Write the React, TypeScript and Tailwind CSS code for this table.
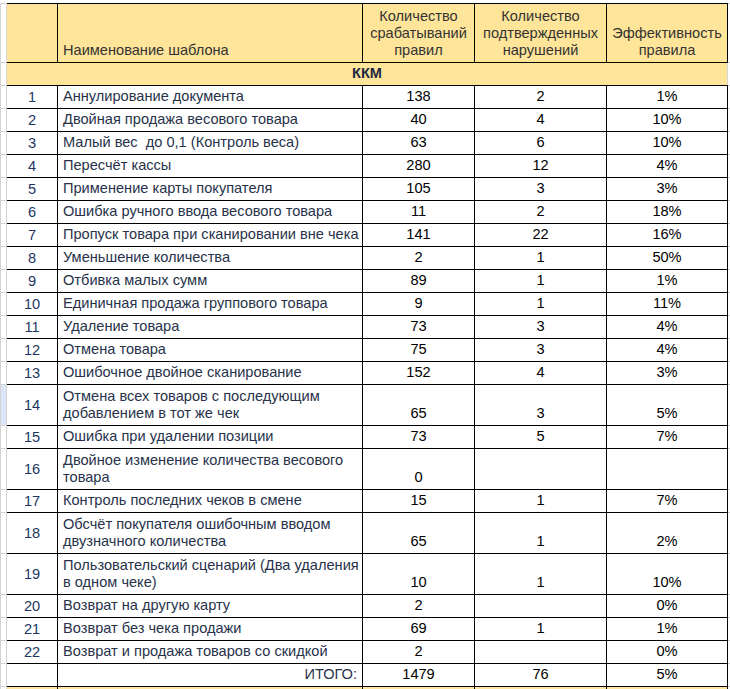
import React from 'react'

type Row = {
  n: number
  name: React.ReactNode
  hits: string
  confirmed: string
  eff: string
  tall?: boolean
}

const rows: Row[] = [
  { n: 1, name: 'Аннулирование документа', hits: '138', confirmed: '2', eff: '1%' },
  { n: 2, name: 'Двойная продажа весового товара', hits: '40', confirmed: '4', eff: '10%' },
  { n: 3, name: 'Малый вес\u00a0 до 0,1 (Контроль веса)', hits: '63', confirmed: '6', eff: '10%' },
  { n: 4, name: 'Пересчёт кассы', hits: '280', confirmed: '12', eff: '4%' },
  { n: 5, name: 'Применение карты покупателя', hits: '105', confirmed: '3', eff: '3%' },
  { n: 6, name: 'Ошибка ручного ввода весового товара', hits: '11', confirmed: '2', eff: '18%' },
  { n: 7, name: 'Пропуск товара при сканировании вне чека', hits: '141', confirmed: '22', eff: '16%' },
  { n: 8, name: 'Уменьшение количества', hits: '2', confirmed: '1', eff: '50%' },
  { n: 9, name: 'Отбивка малых сумм', hits: '89', confirmed: '1', eff: '1%' },
  { n: 10, name: 'Единичная продажа группового товара', hits: '9', confirmed: '1', eff: '11%' },
  { n: 11, name: 'Удаление товара', hits: '73', confirmed: '3', eff: '4%' },
  { n: 12, name: 'Отмена товара', hits: '75', confirmed: '3', eff: '4%' },
  { n: 13, name: 'Ошибочное двойное сканирование', hits: '152', confirmed: '4', eff: '3%' },
  {
    n: 14,
    name: (
      <>
        Отмена всех товаров с последующим
        <br />
        добавлением в тот же чек
      </>
    ),
    hits: '65',
    confirmed: '3',
    eff: '5%',
    tall: true,
  },
  { n: 15, name: 'Ошибка при удалении позиции', hits: '73', confirmed: '5', eff: '7%' },
  {
    n: 16,
    name: (
      <>
        Двойное изменение количества весового
        <br />
        товара
      </>
    ),
    hits: '0',
    confirmed: '',
    eff: '',
    tall: true,
  },
  { n: 17, name: 'Контроль последних чеков в смене', hits: '15', confirmed: '1', eff: '7%' },
  {
    n: 18,
    name: (
      <>
        Обсчёт покупателя ошибочным вводом
        <br />
        двузначного количества
      </>
    ),
    hits: '65',
    confirmed: '1',
    eff: '2%',
    tall: true,
  },
  {
    n: 19,
    name: (
      <>
        Пользовательский сценарий (Два удаления
        <br />в одном чеке)
      </>
    ),
    hits: '10',
    confirmed: '1',
    eff: '10%',
    tall: true,
  },
  { n: 20, name: 'Возврат на другую карту', hits: '2', confirmed: '', eff: '0%' },
  { n: 21, name: 'Возврат без чека продажи', hits: '69', confirmed: '1', eff: '1%' },
  { n: 22, name: 'Возврат и продажа товаров со скидкой', hits: '2', confirmed: '', eff: '0%' },
]

const cell = 'border border-black px-[5px] pb-[3px] align-bottom leading-[17px]'
const grid = 'border border-[#d4d4d4] p-0'

export default function App() {
  return (
    <div
      className="w-[730px] h-[689px] overflow-hidden bg-white pt-[3px] text-[14.6px] text-black"
      style={{ fontFamily: '"Liberation Sans", Arial, sans-serif' }}
    >
      <table className="table-fixed border-collapse w-[730px]">
        <colgroup>
          <col className="w-[6px]" />
          <col className="w-[51px]" />
          <col className="w-[305px]" />
          <col className="w-[112px]" />
          <col className="w-[132px]" />
          <col className="w-[121px]" />
          <col className="w-[3px]" />
        </colgroup>
        <thead>
          <tr className="h-[59px] bg-[#ffe599] text-[#333333]">
            <td className={`${grid} bg-white`} />
            <th className="border-y border-black border-r font-normal" />
            <th className={`${cell} text-left font-normal`}>Наименование шаблона</th>
            <th className={`${cell} font-normal leading-[17.5px]`}>
              Количество
              <br />
              срабатываний
              <br />
              правил
            </th>
            <th className={`${cell} font-normal leading-[17.5px]`}>
              Количество
              <br />
              подтвержденных
              <br />
              нарушений
            </th>
            <th className={`${cell} font-normal leading-[17.5px]`}>
              Эффективность
              <br />
              правила
            </th>
            <td className={`${grid} bg-white`} />
          </tr>
        </thead>
        <tbody>
          <tr className="h-[23px]">
            <td className={`${grid} bg-white`} />
            <td
              colSpan={5}
              className="border-y border-black bg-[#ffe599] pb-[3px] text-center align-bottom font-bold leading-[17px] text-[#1f2a44]"
            >
              ККМ
            </td>
            <td className={`${grid} bg-white`} />
          </tr>
          {rows.map((r) => (
            <tr key={r.n} className={r.tall ? 'h-[41px]' : 'h-[23px]'}>
              <td className={`${grid} ${r.n === 14 ? 'bg-[#dbe6f8]' : 'bg-white'}`} />
              <td className="border-y border-r border-black text-center align-middle leading-[16px] text-[#1d3563]">
                {r.n}
              </td>
              <td className={`${cell} text-left text-[#27324a] whitespace-nowrap`}>{r.name}</td>
              <td className={`${cell} text-center`}>{r.hits}</td>
              <td className={`${cell} text-center`}>{r.confirmed}</td>
              <td className={`${cell} text-center`}>{r.eff}</td>
              <td className={grid} />
            </tr>
          ))}
          <tr className="h-[23px]">
            <td className={grid} />
            <td className="border-y border-r border-black" />
            <td className={`${cell} text-right text-[#27324a]`}>ИТОГО:</td>
            <td className={`${cell} text-center`}>1479</td>
            <td className={`${cell} text-center`}>76</td>
            <td className={`${cell} text-center`}>5%</td>
            <td className={grid} />
          </tr>
          <tr className="h-[23px] bg-[#ffe599]">
            <td className={`${grid} bg-white`} />
            <td className="border-y border-r border-black" />
            <td className={cell} />
            <td className={cell} />
            <td className={cell} />
            <td className={cell} />
            <td className={`${grid} bg-white`} />
          </tr>
        </tbody>
      </table>
    </div>
  )
}
